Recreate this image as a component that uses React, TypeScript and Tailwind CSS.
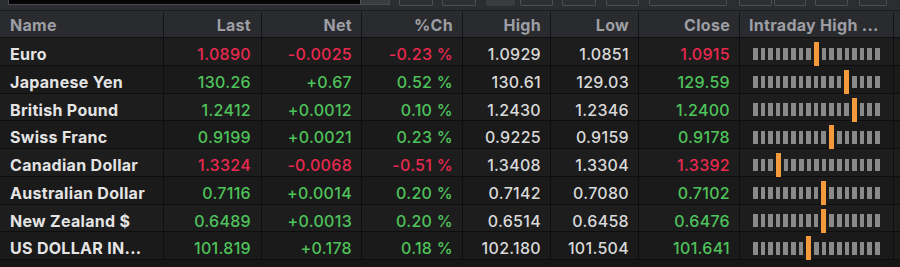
import React from "react";

type Row = {
  name: string;
  last: string;
  net: string;
  pct: string;
  high: string;
  low: string;
  close: string;
  dir: "up" | "down";
  marker: number;
};

const rows: Row[] = [
  { name: "Euro", last: "1.0890", net: "-0.0025", pct: "-0.23 %", high: "1.0929", low: "1.0851", close: "1.0915", dir: "down", marker: 8 },
  { name: "Japanese Yen", last: "130.26", net: "+0.67", pct: "0.52 %", high: "130.61", low: "129.03", close: "129.59", dir: "up", marker: 12 },
  { name: "British Pound", last: "1.2412", net: "+0.0012", pct: "0.10 %", high: "1.2430", low: "1.2346", close: "1.2400", dir: "up", marker: 13 },
  { name: "Swiss Franc", last: "0.9199", net: "+0.0021", pct: "0.23 %", high: "0.9225", low: "0.9159", close: "0.9178", dir: "up", marker: 10 },
  { name: "Canadian Dollar", last: "1.3324", net: "-0.0068", pct: "-0.51 %", high: "1.3408", low: "1.3304", close: "1.3392", dir: "down", marker: 3 },
  { name: "Australian Dollar", last: "0.7116", net: "+0.0014", pct: "0.20 %", high: "0.7142", low: "0.7080", close: "0.7102", dir: "up", marker: 9 },
  { name: "New Zealand $", last: "0.6489", net: "+0.0013", pct: "0.20 %", high: "0.6514", low: "0.6458", close: "0.6476", dir: "up", marker: 9 },
  { name: "US DOLLAR IN...", last: "101.819", net: "+0.178", pct: "0.18 %", high: "102.180", low: "101.504", close: "101.641", dir: "up", marker: 7 },
];

const gridCols = "grid grid-cols-[164px_98px_100px_101px_88px_88px_101px_154px_1fr]";

function Bars({ marker }: { marker: number }) {
  const items: React.ReactNode[] = [];
  for (let i = 0; i < 16; i++) {
    if (i === marker) {
      items.push(<div key="m" className="w-[5px] h-[24px] shrink-0 bg-[#f59a3c]" />);
    }
    items.push(<div key={i} className="w-[4.6px] h-[12.5px] shrink-0 bg-[#8a8a8a]" />);
  }
  if (marker >= 16) items.push(<div key="m" className="w-[5px] h-[24px] shrink-0 bg-[#f59a3c]" />);
  return <div className="flex items-center gap-[3px] pl-[13px] h-full">{items}</div>;
}

const topButtons = [
  { ml: 9, w: 34 },
  { ml: 9, w: 34 },
  { ml: 10, w: 29, flat: true },
  { ml: 5, w: 33 },
  { ml: 9, w: 34 },
  { ml: 10, w: 33 },
  { ml: 10, w: 78 },
  { ml: 12, w: 33 },
  { ml: 2, w: 32 },
  { ml: 9, w: 33 },
  { ml: 11, w: 28 },
];

export default function App() {
  const font = { fontFamily: "Inter, 'Open Sans', 'Liberation Sans', sans-serif" };
  return (
    <div className="w-[900px] h-[267px] bg-[#161616] overflow-hidden" style={font}>
      {/* top toolbar */}
      <div className="h-[11px] bg-[#2c2d31] flex items-start pl-[8px] border-b border-[#1c1c1e]">
        <div className="w-[382px] h-[5px] bg-[#050505] border-x border-b border-[#4a4b4f] flex justify-end">
          <div className="w-[29px] h-[4px] bg-[#3b3c40] border-l border-[#55565a]" />
        </div>
        {topButtons.map((b, i) => (
          <div
            key={i}
            style={{ marginLeft: b.ml, width: b.w }}
            className={
              b.flat
                ? "h-[6px] bg-[#3a3c40] rounded-b-[2px]"
                : "h-[6px] bg-[#2e2f33] border-x border-b border-[#4e4f54] rounded-b-[2px]"
            }
          />
        ))}
      </div>
      {/* header */}
      <div className={`${gridCols} h-[27px] bg-[#2a2b2f] text-[16px] tracking-[0.3px] font-bold text-[#9d9ea4] border-b border-[#101010] pt-[1px]`}>
        <div className="flex items-center pl-[10px] border-r border-[#141414]">Name</div>
        <div className="flex items-center justify-end pr-[10px] border-r border-[#141414]">Last</div>
        <div className="flex items-center justify-end pr-[9px] border-r border-[#141414]">Net</div>
        <div className="flex items-center justify-end pr-[9px] border-r border-[#141414]">%Ch</div>
        <div className="flex items-center justify-end pr-[9px] border-r border-[#141414]">High</div>
        <div className="flex items-center justify-end pr-[9px] border-r border-[#141414]">Low</div>
        <div className="flex items-center justify-end pr-[9px] border-r border-[#141414]">Close</div>
        <div className="flex items-center pl-[9px] border-r border-[#141414] whitespace-nowrap overflow-hidden">Intraday High ...</div>
        <div />
      </div>
      {/* rows */}
      {rows.map((r, i) => {
        const c = r.dir === "down" ? "text-[#e8294f]" : "text-[#4fc35b]";
        const bg = i % 2 === 0 ? "bg-[#1d1d1d]" : "bg-[#1a1a1a]";
        return (
          <div key={r.name} className={`${gridCols} h-[27.75px] ${bg} text-[16px] tracking-[0.3px] border-b border-[#0e0e0e]`}>
            <div className="flex items-center pt-[4px] pl-[10px] font-bold text-[#e4e4e4] border-r border-[#0e0e0e] whitespace-nowrap overflow-hidden">{r.name}</div>
            <div className={`flex items-center pt-[4px] justify-end pr-[10px] font-medium ${c} border-r border-[#0e0e0e]`}>{r.last}</div>
            <div className={`flex items-center pt-[4px] justify-end pr-[9px] font-medium ${c} border-r border-[#0e0e0e]`}>{r.net}</div>
            <div className={`flex items-center pt-[4px] justify-end pr-[9px] font-medium ${c} border-r border-[#0e0e0e]`}>{r.pct}</div>
            <div className="flex items-center pt-[4px] justify-end pr-[9px] font-medium text-[#d9d9d9] border-r border-[#0e0e0e]">{r.high}</div>
            <div className="flex items-center pt-[4px] justify-end pr-[9px] font-medium text-[#d9d9d9] border-r border-[#0e0e0e]">{r.low}</div>
            <div className={`flex items-center pt-[4px] justify-end pr-[9px] font-medium ${c} border-r border-[#0e0e0e]`}>{r.close}</div>
            <div className="pt-[4px] border-r border-[#0e0e0e]">
              <Bars marker={r.marker} />
            </div>
            <div />
          </div>
        );
      })}
    </div>
  );
}
